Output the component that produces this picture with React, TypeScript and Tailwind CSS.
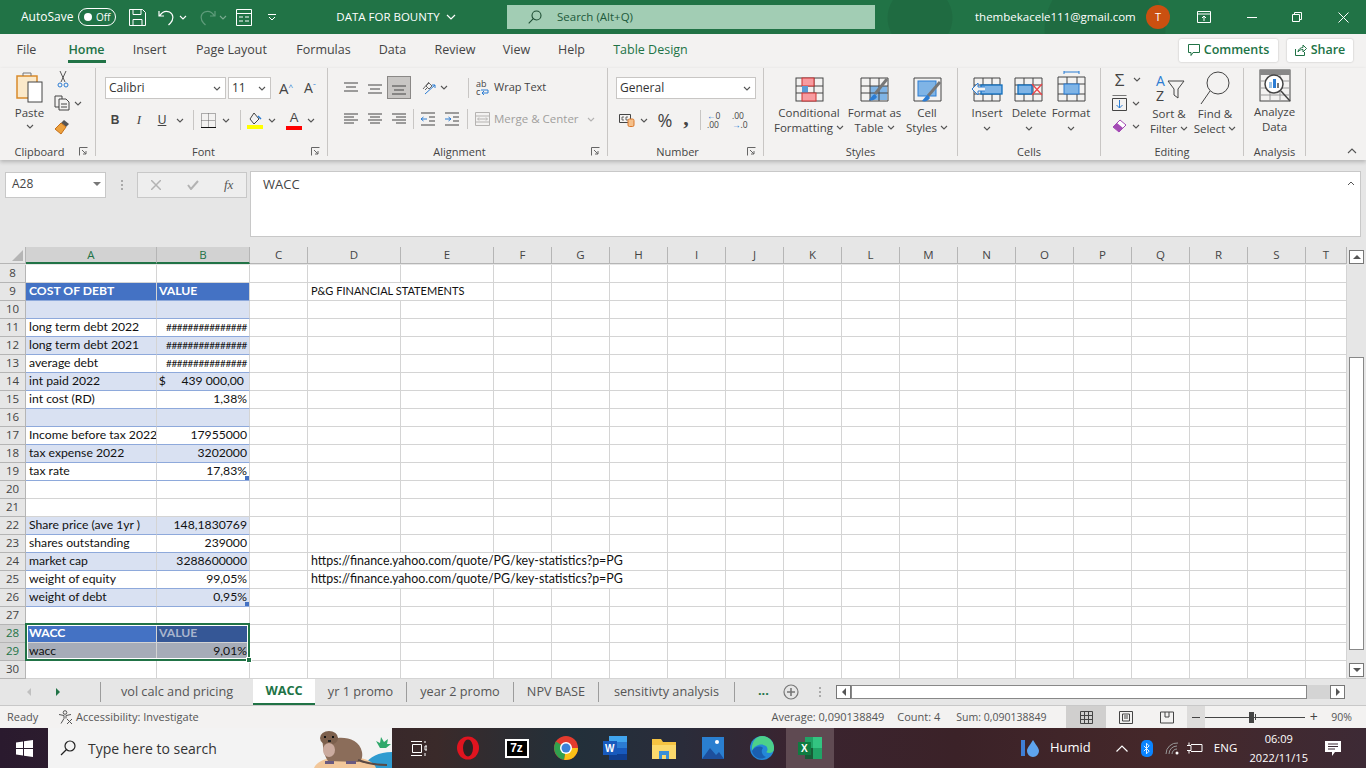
import React from "react";

const cols = ["C", "D", "E", "F", "G", "H", "I", "J", "K", "L", "M", "N", "O", "P", "Q", "R", "S", "T"];
const gridCols =
  "grid-cols-[26px_131px_93px_58px_93px_93px_58px_58px_58px_58px_58px_58px_58px_58px_58px_58px_58px_58px_58px_58px_41px]";

type Row = { n: number; a?: string; b?: string; kind?: "head" | "band" | "plain" | "none"; corner?: boolean; d?: string; span?: "two" | "five" };

const rows: Row[] = [
  { n: 8, kind: "none" },
  { n: 9, a: "COST OF DEBT", b: "VALUE", kind: "head", d: "P&G FINANCIAL STATEMENTS", span: "two" },
  { n: 10, kind: "band" },
  { n: 11, a: "long term debt 2022", b: "###############", kind: "plain" },
  { n: 12, a: "long term debt 2021", b: "###############", kind: "band" },
  { n: 13, a: "average debt", b: "###############", kind: "plain" },
  { n: 14, a: "int paid 2022", b: "$     439 000,00 ", kind: "band" },
  { n: 15, a: "int cost (RD)", b: "1,38%", kind: "plain" },
  { n: 16, kind: "band" },
  { n: 17, a: "Income before tax 2022", b: "17955000", kind: "plain" },
  { n: 18, a: "tax expense 2022", b: "3202000", kind: "band" },
  { n: 19, a: "tax rate", b: "17,83%", kind: "plain", corner: true },
  { n: 20, kind: "none" },
  { n: 21, kind: "none" },
  { n: 22, a: "Share price (ave 1yr )", b: "148,1830769", kind: "band" },
  { n: 23, a: "shares outstanding", b: "239000", kind: "plain" },
  { n: 24, a: "market cap", b: "3288600000", kind: "band", d: "https://finance.yahoo.com/quote/PG/key-statistics?p=PG", span: "five" },
  { n: 25, a: "weight of equity", b: "99,05%", kind: "plain", d: "https://finance.yahoo.com/quote/PG/key-statistics?p=PG", span: "five" },
  { n: 26, a: "weight of debt", b: "0,95%", kind: "band", corner: true },
  { n: 27, kind: "none" },
  { n: 28, a: "WACC", b: "VALUE", kind: "head" },
  { n: 29, a: "wacc", b: "9,01%", kind: "plain" },
  { n: 30, kind: "none" },
];

const ribbonTabs = [
  { label: "File", cls: "w-[41px]" },
  { label: "Home", cls: "w-[79px] font-semibold text-[#217346]" },
  { label: "Insert", cls: "w-[47px]" },
  { label: "Page Layout", cls: "w-[117px]" },
  { label: "Formulas", cls: "w-[67px]" },
  { label: "Data", cls: "w-[71px]" },
  { label: "Review", cls: "w-[54px]" },
  { label: "View", cls: "w-[69px]" },
  { label: "Help", cls: "w-[41px]" },
  { label: "Table Design", cls: "w-[117px] text-[#217346]" },
];

const sheetTabs = [
  { label: "vol calc and pricing", cls: "w-[152px]" },
  { label: "WACC", cls: "w-[62px] bg-white font-bold text-[#217346] border-b-2 border-[#217346]" },
  { label: "yr 1 promo", cls: "w-[92px] border-r border-[#9c9c9c]" },
  { label: "year 2 promo", cls: "w-[107px] border-r border-[#9c9c9c]" },
  { label: "NPV BASE", cls: "w-[85px] border-r border-[#9c9c9c]" },
  { label: "sensitivty analysis", cls: "w-[136px] border-r border-[#9c9c9c]" },
];

function Chev({ className = "" }: { className?: string }) {
  return (
    <svg viewBox="0 0 8 5" className={`w-[8px] h-[5px] shrink-0 ${className}`} fill="none" stroke="#555" strokeWidth="1.1">
      <path d="M1 1l3 3 3-3" />
    </svg>
  );
}

function Launcher() {
  return (
    <svg viewBox="0 0 9 9" className="w-[9px] h-[9px] shrink-0" fill="none" stroke="#666" strokeWidth="1">
      <path d="M.5 8.500V.5h8M3 3l4 4M7 4v3H4" />
    </svg>
  );
}

function Lines({ d }: { d: string }) {
  return (
    <svg viewBox="0 0 16 14" className="w-[16px] h-[14px]" stroke="#444" strokeWidth="1">
      <path d={d} />
    </svg>
  );
}

const Sep = ({ cls }: { cls: string }) => <div className={`w-px bg-[#c8c6c4] ${cls}`} />;

function Group({ w, label, launcher, children }: { w: string; label: string; launcher?: boolean; children: React.ReactNode }) {
  return (
    <div className={`flex flex-col h-[88px] border-r border-[#c8c6c4] shrink-0 ${w}`}>
      <div className="flex-1 min-h-0">{children}</div>
      <div className="flex items-center h-[14px] text-[11px] text-[#444] leading-none mb-[-2px]">
        <span className="flex-1 text-center">{label}</span>
        {launcher && <span className="w-[16px] flex"><Launcher /></span>}
      </div>
    </div>
  );
}

function TitleBar() {
  return (
    <div className="h-[34px] bg-[#217346] flex items-center text-white text-[12px] shrink-0">
      <span className="ml-[21px] w-[57px]">AutoSave</span>
      <div className="w-[38px] h-[18px] rounded-full border border-white flex items-center pl-[5px] gap-[4px]">
        <span className="w-[8px] h-[8px] rounded-full bg-white" />
        <span className="text-[10px] leading-none">Off</span>
      </div>
      <svg viewBox="0 0 17 17" className="ml-[13px] w-[17px] h-[17px]" fill="none" stroke="#fff">
        <path d="M.5.5h13l3 3v13H.5zM4 .5v5h8v-5M4 16.500v-6h9v6" />
      </svg>
      <svg viewBox="0 0 17 17" className="ml-[12px] w-[17px] h-[17px]" fill="none" stroke="#fff" strokeWidth="1.2">
        <path d="M1 2v5h5M1.500 7C4 3 8 1.500 11.500 3c4 2 4.500 7 1 11l-2 2" />
      </svg>
      <Chev className="ml-[4px] [&>path]:stroke-white" />
      <svg viewBox="0 0 17 17" className="ml-[12px] w-[17px] h-[17px]" fill="none" stroke="#5f9c7b" strokeWidth="1.2">
        <path d="M16 2v5h-5M15.500 7C13 3 9 1.500 5.500 3c-4 2-4.500 7-1 11l2 2" />
      </svg>
      <Chev className="ml-[3px] opacity-40 [&>path]:stroke-white" />
      <svg viewBox="0 0 16 17" className="ml-[9px] w-[16px] h-[17px]" fill="none" stroke="#fff">
        <path d="M.5.5h15v16H.5zM.5 4.500h15M3 8h4M9 8h4M3 12h4M9 12h4" />
      </svg>
      <svg viewBox="0 0 8 7" className="ml-[16px] w-[8px] h-[7px]" fill="none" stroke="#fff">
        <path d="M0 .5h8M1 3l3 3 3-3" />
      </svg>
      <span className="ml-[59px] w-[106px] text-center whitespace-nowrap text-[11.5px]">DATA FOR BOUNTY</span>
      <svg viewBox="0 0 10 6" className="ml-[5px] w-[10px] h-[6px]" fill="none" stroke="#fff" strokeWidth="1.2">
        <path d="M1 1l4 4 4-4" />
      </svg>
      <div className="ml-[51px] w-[368px] h-[24px] bg-[#a2cdb4] flex items-center text-[#205a3a] text-[11.5px]">
        <svg viewBox="0 0 14 14" className="ml-[21px] w-[14px] h-[14px]" fill="none" stroke="#1d4d33" strokeWidth="1.1">
          <circle cx="8.500" cy="5.500" r="4.500" />
          <path d="M5.300 8.700L.7 13.300" />
        </svg>
        <span className="ml-[15px]">Search (Alt+Q)</span>
      </div>
      <div className="flex-1 h-full flex items-center bg-[radial-gradient(circle_at_45px_18px,#1f6b41_0,#1f6b41_32px,transparent_33px),radial-gradient(circle_at_230px_30px,#1f6b41_0,#1f6b41_60px,transparent_61px)]">
        <span className="ml-[100px] w-[160px] text-center whitespace-nowrap text-[11.5px]">thembekacele111@gmail.com</span>
        <span className="ml-[11px] w-[24px] h-[24px] rounded-full bg-[#ca5010] flex items-center justify-center text-[11px]">T</span>
        <svg viewBox="0 0 14 12" className="ml-[27px] w-[14px] h-[12px]" fill="none" stroke="#fff">
          <path d="M.5.5h13v11H.5zM.5 3h13M7 10V5M5 7l2-2 2 2" />
        </svg>
        <span className="ml-[36px] w-[10px] h-px bg-white" />
        <svg viewBox="0 0 10 10" className="ml-[35px] w-[10px] h-[10px]" fill="none" stroke="#fff">
          <path d="M.5 2.500h7v7h-7zM2.500 2.500v-2h7v7h-2" />
        </svg>
        <svg viewBox="0 0 11 11" className="ml-[36px] w-[11px] h-[11px]" fill="none" stroke="#fff">
          <path d="M.5.5l10 10M10.500.5l-10 10" />
        </svg>
      </div>
    </div>
  );
}

function TabsRow() {
  return (
    <div className="h-[34px] bg-[#f3f2f1] flex items-center pl-[6px] pb-[2px] text-[12.5px] text-[#444] shrink-0">
      {ribbonTabs.map((t) => (
        <div key={t.label} className={`h-full flex items-center justify-center relative shrink-0 ${t.cls}`}>
          <span className="whitespace-nowrap">{t.label}</span>
          {t.label === "Home" && <span className="absolute bottom-[3px] left-[21px] w-[38px] h-[3px] bg-[#217346]" />}
        </div>
      ))}
      <div className="ml-auto mr-[13px] flex gap-[9px] text-[#217346] font-semibold text-[12.5px]">
        <div className="w-[99px] h-[23px] bg-white rounded-[2px] shadow-[0_0_2px_rgba(0,0,0,.25)] flex items-center justify-center gap-[4px]">
          <svg viewBox="0 0 12 12" className="w-[12px] h-[12px]" fill="none" stroke="#217346">
            <path d="M.5.5h11v8H5l-2 3v-3H.5z" />
          </svg>
          Comments
        </div>
        <div className="w-[66px] h-[23px] bg-white rounded-[2px] shadow-[0_0_2px_rgba(0,0,0,.25)] flex items-center justify-center gap-[4px]">
          <svg viewBox="0 0 12 12" className="w-[12px] h-[12px]" fill="none" stroke="#217346">
            <path d="M.5 5v6.500h9V8M3 8c0-3 3-4.500 5-4.500V1l3.500 3.500L8 8V5.500C6 5.500 4 6 3 8z" />
          </svg>
          Share
        </div>
      </div>
    </div>
  );
}

function BigBtn({ w, label1, label2, children }: { w: string; label1: string; label2: string; children: React.ReactNode }) {
  return (
    <div className={`flex flex-col items-center shrink-0 ${w}`}>
      <div className="h-[33px] flex items-end">{children}</div>
      <span className="mt-[2px] text-[11.5px] leading-[15px] text-[#444] whitespace-nowrap">{label1}</span>
      <span className="text-[11.5px] leading-[15px] text-[#444] whitespace-nowrap flex items-center gap-[3px]">
        {label2}
        <Chev className="w-[7px]" />
      </span>
    </div>
  );
}

function CellBtn({ label, children }: { label: string; children: React.ReactNode }) {
  return (
    <div className="w-[42px] flex flex-col items-center">
      <div className="h-[33px] flex items-end">{children}</div>
      <span className="mt-[2px] text-[11.5px] leading-[15px] text-[#444]">{label}</span>
      <Chev className="mt-[6px]" />
    </div>
  );
}

function Ribbon() {
  return (
    <div className="h-[92px] bg-[#f3f2f1] flex items-start relative z-10 shadow-[0_2px_4px_rgba(0,0,0,0.22)] shrink-0">
      <Group w="w-[96px]" label="Clipboard" launcher>
        <div className="flex pt-[3px]">
          <div className="w-[53px] flex flex-col items-center pl-[6px]">
            <svg viewBox="0 0 28 32" className="w-[28px] h-[32px]" fill="none">
              <path d="M1 5h20v22H1z" stroke="#d98b2b" strokeWidth="1.500" fill="#fbe9c9" />
              <path d="M7 5V2h8v3" stroke="#777" />
              <rect x="12" y="11" width="14" height="20" fill="#fff" stroke="#444" />
            </svg>
            <span className="mt-[2px] text-[11.5px] leading-[16px] text-[#444]">Paste</span>
            <Chev className="mt-[3px]" />
          </div>
          <div className="flex flex-col pl-[1px]">
            <svg viewBox="0 0 12 17" className="ml-[3px] w-[12px] h-[17px]" fill="none" stroke="#555">
              <path d="M3 0l5 11M9 0L4 11" />
              <circle cx="3" cy="14" r="2" stroke="#2b7cd3" />
              <circle cx="9" cy="14" r="2" stroke="#2b7cd3" />
            </svg>
            <div className="mt-[7px] flex items-center gap-[4px]">
              <svg viewBox="0 0 16 16" className="w-[16px] h-[16px]" fill="none" stroke="#444">
                <path d="M1 1h7v3M1 1v11h4M5 4h7l3 3v8H5zM7 9h6M7 12h6" />
              </svg>
              <Chev className="w-[7px]" />
            </div>
            <svg viewBox="0 0 16 16" className="mt-[8px] w-[16px] h-[16px]">
              <path d="M10 1l5 4-3 3-5-4z" fill="#555" />
              <path d="M7 4l5 4-5 7-6-5z" fill="#eda13d" stroke="#c4701a" />
            </svg>
          </div>
        </div>
      </Group>
      <Group w="w-[232px]" label="Font" launcher>
        <div className="flex items-center pt-[9px] pl-[9px]">
          <div className="w-[121px] h-[22px] bg-white border border-[#c8c6c4] flex items-center pl-[3px] text-[12px] text-[#333]">
            Calibri
            <Chev className="ml-auto mr-[4px]" />
          </div>
          <div className="ml-[2px] w-[43px] h-[22px] bg-white border border-[#c8c6c4] flex items-center pl-[3px] text-[12px] text-[#333]">
            11
            <Chev className="ml-auto mr-[4px]" />
          </div>
          <span className="ml-[8px] w-[25px] text-[15px] leading-none text-[#444]">
            A<sup className="text-[8px] text-[#2b7cd3]">^</sup>
          </span>
          <span className="text-[14px] leading-none text-[#444]">
            A<sup className="text-[8px] text-[#2b7cd3]">ˇ</sup>
          </span>
        </div>
        <div className="flex items-center mt-[10px] pl-[7px] h-[22px] text-[#444] text-[13px]">
          <span className="w-[24px] text-center font-bold font-['Liberation_Sans',sans-serif] text-[12px]">B</span>
          <span className="w-[24px] text-center italic font-['Liberation_Serif',serif]">I</span>
          <span className="w-[22px] text-center underline font-['Liberation_Sans',sans-serif] text-[12px]">U</span>
          <Chev className="ml-[3px]" />
          <Sep cls="ml-[9px] h-[20px]" />
          <svg viewBox="0 0 15 15" className="ml-[7px] w-[15px] h-[15px]" fill="none" stroke="#666" strokeDasharray="1 1">
            <path d="M.5.5h14v14H.5zM7.500.5v14M.5 7.500h14" />
            <path d="M0 14.500h15" stroke="#111" strokeDasharray="none" />
          </svg>
          <Chev className="ml-[6px]" />
          <Sep cls="ml-[10px] h-[20px]" />
          <svg viewBox="0 0 16 17" className="ml-[6px] w-[16px] h-[17px]" fill="none">
            <path d="M7 1l5 6-5 5-4-5z" stroke="#444" />
            <path d="M11 4l3 3" stroke="#2b7cd3" strokeWidth="1.500" />
            <rect x="0" y="13" width="16" height="4" fill="#ffff00" />
          </svg>
          <Chev className="ml-[5px]" />
          <div className="ml-[10px] w-[16px] h-[19px] flex flex-col items-center justify-between">
            <span className="text-[13px] leading-[14px] font-['Liberation_Sans',sans-serif]">A</span>
            <span className="w-[16px] h-[4px] bg-[#ff0000]" />
          </div>
          <Chev className="ml-[5px]" />
        </div>
      </Group>
      <Group w="w-[280px]" label="Alignment" launcher>
        <div className="flex items-center pt-[8px] pl-[11px] h-[31px]">
          <div className="w-[24px] flex justify-center"><Lines d="M1 2h14M3 6h10M1 10h14" /></div>
          <div className="w-[24px] flex justify-center"><Lines d="M1 4h14M3 8h10M1 12h14" /></div>
          <div className="w-[24px] h-[23px] bg-[#c8c6c4] border border-[#8a8886] flex items-center justify-center"><Lines d="M1 5h14M3 9h10M1 13h14" /></div>
          <svg viewBox="0 0 16 16" className="ml-[10px] w-[16px] h-[16px]" fill="none">
            <path d="M2 9l6-7M4 10l3-3M8 3l3 3-3 3-3-3z" stroke="#666" />
            <path d="M4 14L14 5M14 5h-3M14 5v3" stroke="#2b7cd3" />
          </svg>
          <Chev className="ml-[3px]" />
          <Sep cls="ml-[20px] h-[20px]" />
          <div className="ml-[7px] w-[15px] flex flex-col text-[9px] leading-[8px] text-[#444]">
            <span>ab</span>
            <div className="flex items-end">
              <span>c</span>
              <svg viewBox="0 0 9 7" className="w-[9px] h-[7px]" fill="none" stroke="#2b7cd3">
                <path d="M1 1h7v3H2M4 2L2 4l2 2" />
              </svg>
            </div>
          </div>
          <span className="ml-[3px] text-[11px] text-[#444] whitespace-nowrap">Wrap Text</span>
        </div>
        <div className="flex items-center mt-[8px] pl-[11px] h-[24px]">
          <div className="w-[24px] flex justify-center"><Lines d="M1 2h14M1 5h10M1 8h14M1 11h10" /></div>
          <div className="w-[24px] flex justify-center"><Lines d="M1 2h14M3 5h10M1 8h14M3 11h10" /></div>
          <div className="w-[24px] flex justify-center"><Lines d="M1 2h14M5 5h10M1 8h14M5 11h10" /></div>
          <Sep cls="ml-[2px] h-[20px]" />
          <div className="ml-[2px] w-[24px] flex justify-center">
            <svg viewBox="0 0 16 14" className="w-[16px] h-[14px]" fill="none" stroke="#444">
              <path d="M1 1h14M9 5h6M9 9h6M1 13h14" />
              <path d="M7 7H1M3.500 5L1 7l2.500 2" stroke="#2b7cd3" />
            </svg>
          </div>
          <div className="w-[24px] flex justify-center">
            <svg viewBox="0 0 16 14" className="w-[16px] h-[14px]" fill="none" stroke="#444">
              <path d="M1 1h14M9 5h6M9 9h6M1 13h14" />
              <path d="M1 7h6M4.500 5L7 7 4.500 9" stroke="#2b7cd3" />
            </svg>
          </div>
          <Sep cls="ml-[3px] h-[20px]" />
          <svg viewBox="0 0 15 14" className="ml-[7px] w-[15px] h-[14px]" fill="none" stroke="#b5b3b1">
            <path d="M.5.5h14v13H.5zM.5 4h14M.5 10h14M3 7h9M4 5.500L2.500 7 4 8.500M11 5.500L12.500 7 11 8.500" />
          </svg>
          <span className="ml-[4px] text-[11.5px] text-[#a19f9d] whitespace-nowrap">Merge &amp; Center</span>
          <Chev className="ml-[8px] opacity-40" />
        </div>
      </Group>
      <Group w="w-[156px]" label="Number" launcher>
        <div className="pt-[9px] pl-[8px]">
          <div className="w-[140px] h-[22px] bg-white border border-[#c8c6c4] flex items-center pl-[3px] text-[12px] text-[#333]">
            General
            <Chev className="ml-auto mr-[4px]" />
          </div>
        </div>
        <div className="flex items-center mt-[10px] pl-[11px] h-[22px] text-[#444]">
          <svg viewBox="0 0 16 14" className="w-[16px] h-[14px]" fill="none" stroke="#444">
            <path d="M.5 1.500h11v8H.5z" />
            <path d="M5 4H3v3h2M9 4H7v3h2" strokeWidth=".8" />
            <rect x="9" y="6" width="6" height="7.500" rx="1.500" fill="#f5c08a" stroke="#d9772a" />
          </svg>
          <Chev className="ml-[5px]" />
          <span className="ml-[7px] w-[20px] text-center text-[18px] leading-none">%</span>
          <span className="ml-[6px] w-[10px] text-center text-[22px] leading-[12px] font-bold font-['Liberation_Serif',serif] h-[16px]">,</span>
          <Sep cls="ml-[9px] h-[20px]" />
          <div className="ml-[6px] w-[17px] text-[8.5px] leading-[9px] text-[#444]"><span className="text-[#2b7cd3]">←</span>0<br />.00</div>
          <div className="ml-[8px] w-[17px] text-[8.5px] leading-[9px] text-[#444]">.00<br /><span className="text-[#2b7cd3]">→</span>.0</div>
        </div>
      </Group>
      <Group w="w-[194px]" label="Styles">
        <div className="flex pt-[2px] pl-[6px]">
          <BigBtn w="w-[78px]" label1="Conditional" label2="Formatting">
            <svg viewBox="0 0 29 27" className="w-[29px] h-[27px]" fill="none">
              <rect x="1" y="2" width="27" height="23" stroke="#444" />
              <path d="M1 10h27M1 17h27M10 2v23M19 2v23" stroke="#444" />
              <rect x="7" y="2" width="12" height="8" fill="#f79ba0" stroke="#c33" />
              <rect x="7" y="10" width="6" height="7" fill="#5a9bd5" />
              <rect x="7" y="17" width="14" height="8" fill="#f79ba0" stroke="#c33" />
            </svg>
          </BigBtn>
          <BigBtn w="w-[53px]" label1="Format as" label2="Table">
            <svg viewBox="0 0 29 27" className="w-[29px] h-[27px]" fill="none">
              <rect x="10" y="10" width="17" height="14" fill="#7fb4e6" />
              <path d="M1 2h27v23H1zM1 10h27M1 17h27M10 2v23M19 2v23" stroke="#444" />
              <path d="M27 3L15 18" stroke="#777" strokeWidth="3" />
              <path d="M15 18c-3 1-4 4-6 6 3 1 6 0 8-3z" fill="#2b7cd3" />
            </svg>
          </BigBtn>
          <BigBtn w="w-[52px]" label1="Cell" label2="Styles">
            <svg viewBox="0 0 29 27" className="w-[29px] h-[27px]" fill="none">
              <path d="M1 2h27v23H1z" stroke="#444" />
              <rect x="5" y="5" width="18" height="15" fill="#7fb4e6" stroke="#2b7cd3" />
              <path d="M27 6L15 20" stroke="#777" strokeWidth="3" />
              <path d="M15 19c-3 1-4 4-6 6 3 1 6 0 8-3z" fill="#2b7cd3" />
            </svg>
          </BigBtn>
        </div>
      </Group>
      <Group w="w-[143px]" label="Cells">
        <div className="flex pt-[2px] pl-[8px]">
          <CellBtn label="Insert">
            <svg viewBox="0 0 32 27" className="w-[32px] h-[27px]" fill="none">
              <path d="M3 2h26v23H3zM3 9h26M3 18h26M12 2v23M21 2v23" stroke="#444" />
              <rect x="10" y="9" width="21" height="9" fill="#7fb4e6" stroke="#106ebe" strokeWidth="1.300" />
              <path d="M14 11H7V7l-6 6 6 6v-4h7" fill="#f3f2f1" stroke="#2b7cd3" />
            </svg>
          </CellBtn>
          <CellBtn label="Delete">
            <svg viewBox="0 0 30 27" className="w-[30px] h-[27px]" fill="none">
              <path d="M1 2h27v23H1zM1 9h27M1 18h27M10 2v23M19 2v23" stroke="#444" />
              <rect x="4" y="9" width="14" height="9" fill="#7fb4e6" stroke="#106ebe" strokeWidth="1.300" />
              <path d="M18 8l10 11M28 8L18 19" stroke="#f0464b" strokeWidth="1.300" />
            </svg>
          </CellBtn>
          <CellBtn label="Format">
            <svg viewBox="0 0 29 32" className="w-[29px] h-[32px]" fill="none">
              <path d="M7 1h15M7 0v3M22 0v3" stroke="#2b7cd3" />
              <path d="M1 6h27v24H1zM1 13h27M1 23h27M10 6v24M20 6v24" stroke="#444" />
              <rect x="7" y="13" width="15" height="10" fill="#7fb4e6" stroke="#2b7cd3" />
            </svg>
          </CellBtn>
        </div>
      </Group>
      <Group w="w-[143px]" label="Editing">
        <div className="flex pt-[3px] pl-[11px]">
          <div className="w-[37px] flex flex-col gap-[8px] pt-[1px]">
            <div className="flex items-center gap-[6px]">
              <span className="w-[15px] text-[17px] leading-[15px] text-[#444] text-center">Σ</span>
              <Chev className="w-[7px]" />
            </div>
            <div className="flex items-center gap-[5px]">
              <svg viewBox="0 0 15 16" className="w-[15px] h-[16px]" fill="none">
                <path d="M.5 3.500h14v12H.5z" stroke="#444" />
                <path d="M.5.500h14" stroke="#777" />
                <path d="M7.500 5v8M4.500 10l3 3 3-3" stroke="#2b7cd3" />
              </svg>
              <Chev className="w-[7px]" />
            </div>
            <div className="flex items-center gap-[4px]">
              <svg viewBox="0 0 16 14" className="w-[16px] h-[14px]">
                <path d="M1 8l7-7 6 5-7 7z" fill="#fff" stroke="#a44bb5" />
                <path d="M1 8l4-4 6 5-4 4z" fill="#a44bb5" />
              </svg>
              <Chev className="w-[7px]" />
            </div>
          </div>
          <div className="w-[40px] flex flex-col items-center">
            <div className="h-[34px] flex pl-[3px]">
              <div className="flex flex-col w-[11px] text-[14px] leading-[15px] pt-[2px]">
                <span className="text-[#2b7cd3]">A</span>
                <span className="text-[#444]">Z</span>
              </div>
              <svg viewBox="0 0 18 20" className="mt-[9px] w-[18px] h-[20px]" fill="none" stroke="#444">
                <path d="M1 1h16l-6 8v9l-4-3V9z" />
              </svg>
            </div>
            <span className="mt-[1px] text-[11.5px] leading-[15px] text-[#444] whitespace-nowrap">Sort &amp;</span>
            <span className="text-[11.5px] leading-[15px] text-[#444] whitespace-nowrap flex items-center gap-[3px]">Filter<Chev className="w-[7px]" /></span>
          </div>
          <div className="ml-[4px] w-[44px] flex flex-col items-center">
            <svg viewBox="0 0 30 34" className="w-[30px] h-[34px]" fill="none" stroke="#444">
              <circle cx="18" cy="12" r="11" />
              <path d="M10 20L1 33" />
            </svg>
            <span className="mt-[1px] text-[11.5px] leading-[15px] text-[#444] whitespace-nowrap">Find &amp;</span>
            <span className="text-[11.5px] leading-[15px] text-[#444] whitespace-nowrap flex items-center gap-[3px]">Select<Chev className="w-[7px]" /></span>
          </div>
        </div>
      </Group>
      <Group w="w-[62px]" label="Analysis">
        <div className="flex flex-col items-center pt-[1px]">
          <svg viewBox="0 0 32 34" className="w-[32px] h-[34px]" fill="none">
            <rect x="1" y="1" width="30" height="31" stroke="#444" />
            <rect x="1" y="1" width="30" height="5" fill="#888" />
            <path d="M1 12h30M1 19h30M1 26h30M11 6v26M21 6v26" stroke="#999" />
            <circle cx="15" cy="15" r="9" fill="#fff" stroke="#444" strokeWidth="1.500" />
            <rect x="10" y="13" width="3" height="6" fill="#9dc3e6" />
            <rect x="14" y="10" width="3" height="9" fill="#2b7cd3" />
            <rect x="18" y="14" width="2" height="5" fill="#777" />
            <path d="M22 22l9 10" stroke="#444" strokeWidth="1.500" />
          </svg>
          <span className="mt-[1px] text-[11.5px] leading-[15px] text-[#444]">Analyze</span>
          <span className="text-[11.5px] leading-[15px] text-[#444]">Data</span>
        </div>
      </Group>
      <div className="flex-1 h-[88px] flex items-end justify-end pr-[9px]">
        <svg viewBox="0 0 10 6" className="w-[10px] h-[6px] mb-[2px]" fill="none" stroke="#555" strokeWidth="1.100">
          <path d="M1 5l4-4 4 4" />
        </svg>
      </div>
    </div>
  );
}

function FormulaBar() {
  return (
    <div className="h-[87px] bg-[#e6e6e6] flex items-start pl-[5px] pt-[11px] shrink-0 text-[12px] text-[#444]">
      <div className="w-[101px] h-[26px] mt-[1px] pb-[2px] bg-white border border-[#c8c8c8] flex items-center pl-[6px]">
        A28
        <span className="ml-auto mr-[4px] w-0 h-0 border-x-[4px] border-x-transparent border-t-[4px] border-t-[#777]" />
      </div>
      <div className="w-[31px] h-[26px] mt-[1px] flex flex-col items-center justify-center gap-[2px]">
        <span className="w-[2px] h-[2px] bg-[#aaa]" />
        <span className="w-[2px] h-[2px] bg-[#aaa]" />
        <span className="w-[2px] h-[2px] bg-[#aaa]" />
      </div>
      <div className="w-[110px] h-[26px] mt-[1px] bg-[#eeeeee] border border-[#c8c8c8] flex items-center">
        <svg viewBox="0 0 10 10" className="ml-[13px] w-[10px] h-[10px]" fill="none" stroke="#b3b3b3" strokeWidth="1.500">
          <path d="M0 0l10 10M10 0L0 10" />
        </svg>
        <svg viewBox="0 0 12 10" className="ml-[26px] w-[12px] h-[10px]" fill="none" stroke="#b3b3b3" strokeWidth="2">
          <path d="M1 5l3 4 7-8" />
        </svg>
        <span className="ml-[25px] text-[13px] italic font-['Liberation_Serif',serif] text-[#555]">fx</span>
      </div>
      <div className="ml-[3px] w-[1111px] h-[66px] bg-white border border-[#c8c8c8] flex items-start pl-[12px] pt-[3px] relative text-[13px]">
        <span>WACC</span>
        <svg viewBox="0 0 8 5" className="absolute right-[5px] top-[9px] w-[8px] h-[5px]" fill="none" stroke="#555">
          <path d="M1 4l3-3 3 3" />
        </svg>
      </div>
    </div>
  );
}

function cellBg(r: Row, col: "a" | "b") {
  if (r.n === 28) return col === "a" ? "bg-[#4472c4] text-white font-bold" : "bg-[#355796] text-[#a9b5ce] font-bold";
  if (r.n === 29) return "bg-[#a6acb8] text-[#111]";
  if (r.kind === "head") return "bg-[#4472c4] text-white font-bold border-b-[#8ea9db]";
  if (r.kind === "band") return "bg-[#d9e1f2] border-b-[#8ea9db]";
  if (r.kind === "plain") return "bg-white border-b-[#8ea9db]";
  return "bg-white";
}

function Sheet() {
  return (
    <div className="flex-1 flex min-h-0 bg-[#e6e6e6] relative">
      <div className="flex-1 min-w-0 relative font-['Lato',sans-serif] text-[12.2px] text-[#111]">
        <div className={`grid ${gridCols} auto-rows-[18px]`}>
          {/* column headers */}
          <div className="h-[17px] bg-[#e6e6e6] border-r border-b border-[#b5b5b5] flex items-end justify-end">
            <span className="w-0 h-0 border-l-[11px] border-l-transparent border-b-[11px] border-b-[#b5b5b5] mb-[2px] mr-[2px]" />
          </div>
          <div className="h-[17px] bg-[#d2d2d2] border-r border-[#b5b5b5] border-b-2 border-b-[#217346] text-center leading-[15px] text-[#217346] font-['Open_Sans',sans-serif] text-[11.5px]">A</div>
          <div className="h-[17px] bg-[#d2d2d2] border-r border-[#b5b5b5] border-b-2 border-b-[#217346] text-center leading-[15px] text-[#217346] font-['Open_Sans',sans-serif] text-[11.5px]">B</div>
          {cols.map((c) => (
            <div key={c} className="h-[17px] bg-[#e6e6e6] border-r border-b border-[#b5b5b5] text-center leading-[16px] text-[#444] font-['Open_Sans',sans-serif] text-[11.5px]">
              {c}
            </div>
          ))}
          {rows.map((r) => {
            const sel = r.n === 28 || r.n === 29;
            return (
              <React.Fragment key={r.n}>
                <div className={`border-r border-b border-[#b5b5b5] text-center leading-[16px] font-['Open_Sans',sans-serif] text-[11.5px] ${sel ? "bg-[#d2d2d2] text-[#217346]" : "bg-[#e6e6e6] text-[#444]"}`}>
                  {r.n}
                </div>
                <div className={`relative border-r border-b border-[#d4d4d4] leading-[16px] pl-[3px] whitespace-nowrap overflow-hidden ${cellBg(r, "a")}`}>{r.a}</div>
                <div className={`relative border-r border-b border-[#d4d4d4] leading-[16px] whitespace-pre overflow-hidden ${r.kind === "head" ? "pl-[2px]" : "text-right pr-[2px]"} ${cellBg(r, "b")}`}>
                  {r.n === 11 || r.n === 12 || r.n === 13 ? <span className="text-[10px] tracking-[-0.4px]">{r.b}</span> : r.b}
                  {r.corner && <span className="absolute right-0 bottom-0 w-[4px] h-[4px] bg-[#4472c4]" />}
                </div>
                <div className="border-r border-b border-[#d4d4d4] bg-white" />
                {r.d ? (
                  <div className={`border-r border-b border-[#d4d4d4] bg-white leading-[16px] pl-[3px] whitespace-nowrap ${r.span === "two" ? "col-span-2 text-[11px]" : "col-span-5 text-[12.4px]"}`}>{r.d}</div>
                ) : null}
                {cols.slice(r.span === "two" ? 3 : r.span === "five" ? 6 : 1).map((c) => (
                  <div key={c} className="border-r border-b border-[#d4d4d4] bg-white" />
                ))}
              </React.Fragment>
            );
          })}
        </div>
        {/* selection outline over A28:B29 */}
        <div className="absolute left-[25px] top-[376px] w-[225px] h-[38px] border-2 border-[#217346] pointer-events-none shadow-[inset_0_0_0_1px_#fff]">
          <span className="absolute right-[-4px] bottom-[-4px] w-[6px] h-[6px] bg-[#217346] border border-white" />
        </div>
      </div>
      {/* vertical scrollbar */}
      <div className="w-[19px] shrink-0 flex flex-col items-center pt-[3px] pb-[1px] bg-[#e6e6e6]">
        <div className="w-[15px] h-[14px] bg-white border border-[#777] flex items-center justify-center">
          <span className="w-0 h-0 border-x-[4px] border-x-transparent border-b-[4px] border-b-[#555]" />
        </div>
        <div className="mt-[93px] w-[15px] h-[293px] bg-white border border-[#888]" />
        <div className="mt-auto w-[15px] h-[14px] bg-white border border-[#777] flex items-center justify-center">
          <span className="w-0 h-0 border-x-[4px] border-x-transparent border-t-[4px] border-t-[#555]" />
        </div>
      </div>
    </div>
  );
}

function SheetTabs() {
  return (
    <div className="h-[28px] bg-[#e6e6e6] border-t border-b border-[#c8c8c8] flex items-center text-[12.7px] text-[#555] shrink-0">
      <span className="ml-[27px] w-0 h-0 border-y-[4px] border-y-transparent border-r-[4px] border-r-[#c0c0c0]" />
      <span className="ml-[25px] mr-[40px] w-0 h-0 border-y-[4px] border-y-transparent border-l-[4px] border-l-[#217346]" />
      <div className="h-full flex items-start">
        <span className="self-center w-px h-[20px] bg-[#9c9c9c]" />
        {sheetTabs.map((t) => (
          <div key={t.label} className={`flex items-center justify-center whitespace-nowrap shrink-0 ${t.cls} ${t.label === "WACC" ? "h-[27px] mt-[-1px]" : "h-[20px] mt-[3px]"}`}>
            {t.label}
          </div>
        ))}
      </div>
      <span className="ml-[23px] w-[14px] text-[#217346] font-bold leading-none mb-[4px]">...</span>
      <svg viewBox="0 0 16 16" className="ml-[11px] w-[16px] h-[16px]" fill="none" stroke="#777" strokeWidth="1.2">
        <circle cx="8" cy="8" r="7" />
        <path d="M8 4v8M4 8h8" strokeWidth="1.600" />
      </svg>
      <div className="ml-[13px] w-[16px] flex flex-col items-center gap-[2px]">
        <span className="w-[2px] h-[2px] bg-[#aaa]" />
        <span className="w-[2px] h-[2px] bg-[#aaa]" />
        <span className="w-[2px] h-[2px] bg-[#aaa]" />
      </div>
      <div className="ml-[8px] w-[15px] h-[14px] bg-white border border-[#777] flex items-center justify-center">
        <span className="w-0 h-0 border-y-[4px] border-y-transparent border-r-[4px] border-r-[#555]" />
      </div>
      <div className="w-[456px] h-[14px] bg-white border border-[#888]" />
      <div className="w-[23px] h-[14px] bg-[#d4d4d4]" />
      <div className="w-[15px] h-[14px] bg-white border border-[#777] flex items-center justify-center">
        <span className="w-0 h-0 border-y-[4px] border-y-transparent border-l-[4px] border-l-[#555]" />
      </div>
    </div>
  );
}

function StatusBar() {
  return (
    <div className="h-[22px] bg-[#f3f2f1] flex items-center text-[11px] text-[#555] shrink-0">
      <span className="ml-[7px] w-[51px] pt-[1px]">Ready</span>
      <svg viewBox="0 0 15 15" className="w-[15px] h-[15px]" fill="none" stroke="#555">
        <circle cx="7" cy="2.500" r="1.800" />
        <path d="M1 4.500l5 1v3l-3 5M13 4.500l-5 1v3M9 9l5 5M14 9l-5 5" />
      </svg>
      <span className="ml-[3px] pt-[1px] whitespace-nowrap">Accessibility: Investigate</span>
      <span className="ml-auto pt-[1px] whitespace-nowrap">Average: 0,090138849</span>
      <span className="ml-[13px] pt-[1px] whitespace-nowrap">Count: 4</span>
      <span className="ml-[16px] w-[92px] pt-[1px] whitespace-nowrap text-[10.5px]">Sum: 0,090138849</span>
      <div className="ml-[18px] w-[40px] h-full bg-[#d0cfce] flex items-center justify-center">
        <svg viewBox="0 0 13 13" className="w-[13px] h-[13px]" fill="none" stroke="#444">
          <path d="M.5.5h12v12H.5zM.5 4.500h12M.5 8.500h12M4.500.5v12M8.500.5v12" />
        </svg>
      </div>
      <div className="w-[40px] flex justify-center">
        <svg viewBox="0 0 14 13" className="w-[14px] h-[13px]" fill="none" stroke="#444">
          <path d="M.5.5h13v12H.5zM3.500 3h7v7h-7zM5 5h4M5 7h4" />
        </svg>
      </div>
      <div className="w-[41px] flex justify-center">
        <svg viewBox="0 0 14 13" className="w-[14px] h-[13px]" fill="none" stroke="#444">
          <path d="M.5 1h13v11H.5zM5 1v5h4V1" />
        </svg>
      </div>
      <div className="w-[18px] h-full bg-[#dddcdb] flex items-center justify-center">
        <span className="w-[8px] h-px bg-[#444]" />
      </div>
      <div className="w-[100px] h-full flex items-center relative">
        <span className="w-full h-px bg-[#444]" />
        <span className="absolute left-[44px] top-[6px] w-[5px] h-[11px] bg-[#444]" />
        <span className="absolute left-[50px] top-[8px] w-px h-[6px] bg-[#444]" />
      </div>
      <span className="ml-[3px] w-[11px] text-[14px] leading-none text-[#444] text-center">+</span>
      <span className="ml-[12px] mr-[14px] pt-[1px] whitespace-nowrap text-[10.5px]">90%</span>
    </div>
  );
}

function Otter() {
  return (
    <svg viewBox="0 0 78 40" className="ml-auto w-[78px] h-[40px]">
      <path d="M50 40c2-9 12-16 28-16v16z" fill="#2f9bd0" />
      <path d="M0 40c3-8 18-12 38-11 14 1 22 5 24 11z" fill="#f2c79a" />
      <path d="M66 20l-4-7 4 2 1-6 3 5 4-3-1 5 4 0-5 4z" fill="#2fa86b" />
      <path d="M8 8c5-3 13-3 16 2 10-1 22 3 24 14 1 6-1 9-4 10l-30-1C9 26 9 18 8 8z" fill="#8b6d5a" />
      <ellipse cx="15" cy="10" rx="9" ry="7" fill="#7c604d" />
      <ellipse cx="15" cy="22" rx="6" ry="7" fill="#cbab9f" />
      <rect x="10" y="8" width="2" height="2" fill="#111" />
      <rect x="18" y="8" width="2" height="2" fill="#111" />
      <rect x="14" y="12" width="3" height="2" fill="#222" />
      <path d="M11 33h9v3h-9zM32 33h10v3H32z" fill="#6a5a80" />
      <path d="M44 32c8 3 16 5 29 5" stroke="#5b4a44" strokeWidth="2" fill="none" />
    </svg>
  );
}

function Taskbar() {
  return (
    <div className="h-[40px] flex items-center text-white shrink-0 bg-[linear-gradient(90deg,#2a1a2e_0%,#3a2a2a_32%,#22303a_42%,#2a2c3a_50%,#3a2430_58%,#3b2228_70%,#45282a_85%,#3d2a35_100%)]">
      <div className="w-[48px] flex justify-center">
        <svg viewBox="0 0 17 17" className="w-[17px] h-[17px]" fill="#fff">
          <path d="M0 2.400l7-1v6.600H0zM8 1.300L17 0v8H8zM0 9h7v6.600l-7-1zM8 9h9v8l-9-1.300z" />
        </svg>
      </div>
      <div className="w-[344px] h-full bg-[#f3f3f3] flex items-center text-[#333] overflow-hidden">
        <svg viewBox="0 0 16 16" className="ml-[12px] w-[16px] h-[16px]" fill="none" stroke="#222" strokeWidth="1.2">
          <circle cx="10" cy="6" r="5" />
          <path d="M6.500 9.500L1 15" />
        </svg>
        <span className="ml-[12px] text-[14px] whitespace-nowrap">Type here to search</span>
        <Otter />
      </div>
      <div className="flex items-center pl-[2px]">
        <div className="w-[49px] flex justify-center">
          <svg viewBox="0 0 16 15" className="w-[16px] h-[15px]" fill="none" stroke="#fff">
            <path d="M0 .5h11M0 14.500h11M1.500 3.500h9v8h-9zM14 0v2M14 5h2v4h-2zM14 12v3" />
          </svg>
        </div>
        <div className="w-[49px] flex justify-center">
          <svg viewBox="0 0 24 24" className="w-[24px] h-[24px]">
            <ellipse cx="12" cy="12" rx="11" ry="11.500" fill="#e0141f" />
            <ellipse cx="12" cy="12" rx="5" ry="8.500" fill="#2e2224" />
          </svg>
        </div>
        <div className="w-[49px] flex justify-center">
          <div className="w-[24px] h-[19px] bg-white flex items-center justify-center">
            <span className="w-[20px] h-[15px] bg-black text-white text-[12px] leading-[15px] text-center font-bold font-['Liberation_Sans',sans-serif]">7z</span>
          </div>
        </div>
        <div className="w-[49px] flex justify-center">
          <svg viewBox="0 0 24 24" className="w-[24px] h-[24px]">
            <circle cx="12" cy="12" r="12" fill="#e33b2e" />
            <path d="M12 12h12A12 12 0 0 1 10 23.800z" fill="#fbc116" />
            <path d="M12 12L2 5.500A12 12 0 0 0 10 23.800z" fill="#30a14e" />
            <circle cx="12" cy="12" r="6" fill="#fff" />
            <circle cx="12" cy="12" r="4.500" fill="#3b82d8" />
          </svg>
        </div>
        <div className="w-[49px] flex justify-center">
          <svg viewBox="0 0 24 24" className="w-[24px] h-[24px]">
            <path d="M6 0h18v6H6z" fill="#41a5ee" />
            <path d="M6 6h18v6H6z" fill="#2b7cd3" />
            <path d="M6 12h18v6H6z" fill="#185abd" />
            <path d="M6 18h18v6H6z" fill="#103f91" />
            <rect x="0" y="5" width="14" height="14" fill="#185abd" />
            <text x="2" y="16" fontSize="10" fontWeight="700" fill="#fff" fontFamily="Liberation Sans">W</text>
          </svg>
        </div>
        <div className="w-[49px] flex justify-center">
          <svg viewBox="0 0 24 22" className="w-[24px] h-[22px]">
            <path d="M0 2h9l2 3h13v17H0z" fill="#f5c342" />
            <path d="M0 8h24v14H0z" fill="#fbd96c" />
            <path d="M7 14h10v8h-3v-4h-4v4H7z" fill="#3a8fd8" />
          </svg>
        </div>
        <div className="w-[49px] flex justify-center">
          <svg viewBox="0 0 22 22" className="w-[22px] h-[22px]">
            <rect width="22" height="22" fill="#2a7fd0" />
            <path d="M0 22l8-11 6 7 3-3 5 7z" fill="#1d4f9c" />
            <circle cx="15" cy="5" r="2" fill="#fff" />
          </svg>
        </div>
        <div className="w-[49px] flex justify-center">
          <svg viewBox="0 0 24 24" className="w-[24px] h-[24px]">
            <circle cx="12" cy="12" r="12" fill="#2487d8" />
            <path d="M12 0a12 12 0 0 1 12 13c0 4-5 5-8 3 2-1 2-4 0-6-4-3-12-1-14 5C1 6 6 0 12 0z" fill="#4cd08a" />
            <path d="M2 15c2-4 8-6 11-3-2 2-2 7 3 9-6 4-13 0-14-6z" fill="#1a5fb0" />
          </svg>
        </div>
        <div className="w-[48px] h-[40px] bg-[#5f4a52] flex items-center justify-center">
          <svg viewBox="0 0 24 24" className="w-[24px] h-[24px]">
            <path d="M7 1h17v22H7z" fill="#21a366" />
            <path d="M15 1h9v11h-9z" fill="#33c481" />
            <path d="M7 12h8v11H7z" fill="#185c37" />
            <rect x="0" y="6" width="13" height="13" fill="#107c41" />
            <text x="3" y="16" fontSize="10" fontWeight="700" fill="#fff" fontFamily="Liberation Sans">X</text>
          </svg>
        </div>
      </div>
      <svg viewBox="0 0 20 20" className="ml-[186px] w-[20px] h-[20px]">
        <rect x="1" y="2" width="4" height="16" fill="#3f7fd6" />
        <path d="M13 2c3 5 6 8 6 11a6 6 0 0 1-12 0c0-3 3-6 6-11z" fill="#5ea4ee" />
      </svg>
      <span className="ml-[10px] text-[13px]">Humid</span>
      <svg viewBox="0 0 12 7" className="ml-[25px] w-[12px] h-[7px]" fill="none" stroke="#fff" strokeWidth="1.2">
        <path d="M.5 6.500L6 1l5.500 5.500" />
      </svg>
      <div className="ml-[13px] w-[12px] h-[17px] rounded-[5px] bg-[#0a84ff] flex items-center justify-center">
        <svg viewBox="0 0 8 12" className="w-[7px] h-[11px]" fill="none" stroke="#fff">
          <path d="M1 3l6 6-3 3V0l3 3-6 6" />
        </svg>
      </div>
      <svg viewBox="0 0 15 13" className="ml-[12px] w-[15px] h-[13px]" fill="none" stroke="#999">
        <path d="M1 12A11 11 0 0 1 13 1M4 12a8 8 0 0 1 8-8M7 12a5 5 0 0 1 5-5" />
        <circle cx="12" cy="11" r="1.500" fill="#fff" stroke="none" />
      </svg>
      <svg viewBox="0 0 17 12" className="ml-[6px] w-[17px] h-[12px]" fill="none" stroke="#fff">
        <path d="M5 2.500h11v7H5M1 3.500h4v5H1M3 .5v3M3 8.500v3" />
      </svg>
      <span className="ml-[11px] text-[11.5px]">ENG</span>
      <div className="ml-[10px] w-[63px] flex flex-col items-center text-[11px] leading-[19px] whitespace-nowrap">
        <span>06:09</span>
        <span>2022/11/15</span>
      </div>
      <svg viewBox="0 0 16 15" className="ml-[15px] w-[16px] h-[15px]" fill="#fff">
        <path d="M0 0h16v11h-6l-3 4v-4H0z" />
        <path d="M3 3h10M3 5.500h10M3 8h7" stroke="#3d2a35" />
      </svg>
    </div>
  );
}

export default function App() {
  return (
    <div className="w-[1366px] h-[768px] flex flex-col overflow-hidden font-['Open_Sans',sans-serif]">
      <TitleBar />
      <TabsRow />
      <Ribbon />
      <FormulaBar />
      <Sheet />
      <SheetTabs />
      <StatusBar />
      <Taskbar />
    </div>
  );
}
